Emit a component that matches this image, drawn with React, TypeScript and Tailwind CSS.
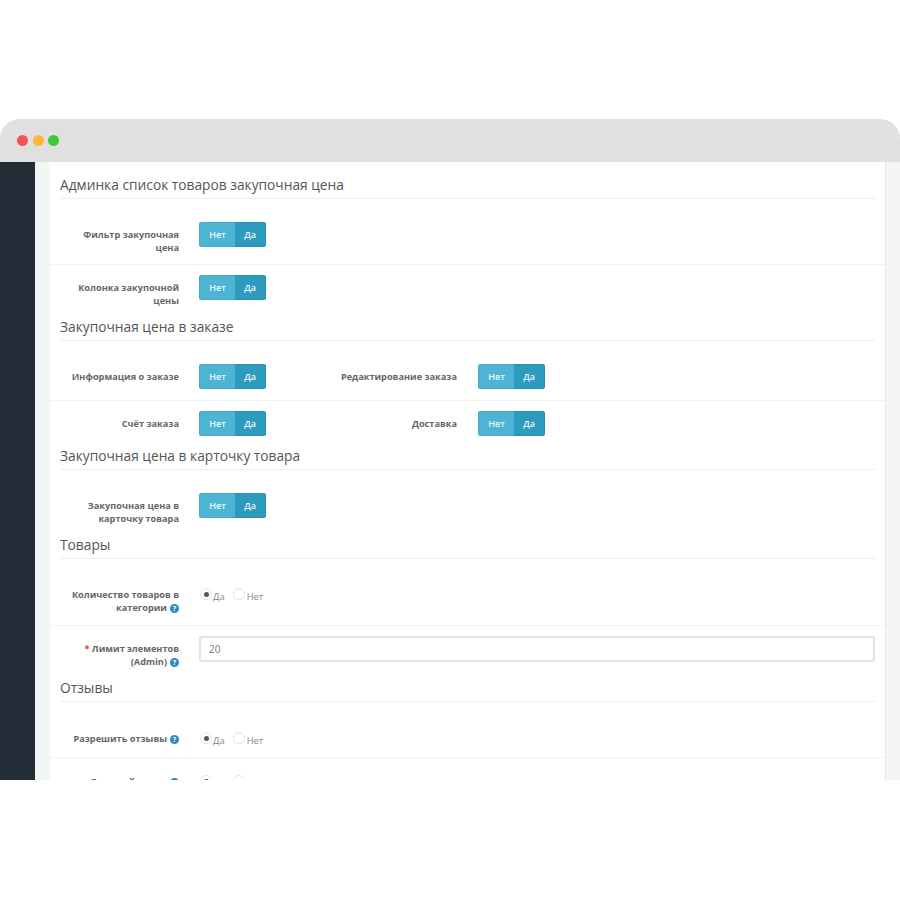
import React from "react";

const Toggle: React.FC = () => (
  <div className="flex w-[67px] h-[25px] rounded-[3px] overflow-hidden text-[9px] font-semibold text-[#eaf7fb] leading-[25px] text-center shrink-0">
    <div className="w-[36px] bg-[#4db4d4] border border-r-0 border-[#45a9c9]">
      <span className="block -mt-px">Нет</span>
    </div>
    <div className="w-[31px] bg-[#2e9abd] border border-l-0 border-[#2a90b1]">
      <span className="block -mt-px">Да</span>
    </div>
  </div>
);

const Help: React.FC = () => (
  <span className="inline-block align-[0px] ml-[3px] w-[9px] h-[9px] rounded-full bg-[#2a8bc4] text-white text-[7px] leading-[9px] font-bold text-center">
    ?
  </span>
);

const Radios: React.FC = () => (
  <div className="flex items-start pt-[6px] pl-[1px] text-[9.4px] text-[#888] leading-[13px]">
    <span className="w-[12px] h-[12px] rounded-full border border-[#e4e4e4] bg-white flex items-center justify-center">
      <span className="w-[5px] h-[5px] rounded-full bg-[#555]" />
    </span>
    <span className="ml-[1px] mt-[2px]">Да</span>
    <span className="ml-[8px] w-[12px] h-[12px] rounded-full border border-[#e4e4e4] bg-white" />
    <span className="ml-[2px] mt-[2px]">Нет</span>
  </div>
);

const Label: React.FC<{ children: React.ReactNode }> = ({ children }) => (
  <div className="w-[129px] mr-[20px] pt-[6px] text-right text-[9.2px] leading-[13px] font-bold text-[#666] shrink-0">
    {children}
  </div>
);

const Heading: React.FC<{ title: string }> = ({ title }) => (
  <div className="mx-[10px] h-[27px] border-b border-[#eeeeee] text-[13.75px] leading-[26px] text-[#555]">
    {title}
  </div>
);

export default function App() {
  return (
    <div className="w-[900px] h-[900px] bg-white pt-[119px] overflow-hidden font-['Open_Sans',sans-serif]">
      <div className="h-[661px] flex flex-col overflow-hidden rounded-t-[20px]">
        {/* browser bar */}
        <div className="h-[43px] bg-[#e0e0e0] flex items-center gap-[4.5px] pl-[17px] shrink-0">
          <span className="w-[11px] h-[11px] rounded-full bg-[#f55252]" />
          <span className="w-[11px] h-[11px] rounded-full bg-[#fbb735]" />
          <span className="w-[11px] h-[11px] rounded-full bg-[#3ec93a]" />
        </div>
        <div className="flex flex-1 min-h-0">
          <div className="w-[35px] bg-[#232d38] shrink-0" />
          <div className="w-[15px] bg-[#f4f5f5] shrink-0" />
          <main className="w-[835px] bg-white pt-[10px] overflow-hidden shrink-0">
            <Heading title="Админка список товаров закупочная цена" />
            <div className="h-[66px] pt-[23px] flex items-start border-b border-[#f2f2f2]">
              <Label>
                Фильтр закупочная
                <br />
                цена
              </Label>
              <Toggle />
            </div>
            <div className="h-[49px] pt-[10px] flex items-start">
              <Label>
                Колонка закупочной
                <br />
                цены
              </Label>
              <Toggle />
            </div>

            <Heading title="Закупочная цена в заказе" />
            <div className="h-[60px] pt-[23px] flex items-start border-b border-[#f2f2f2]">
              <Label>Информация о заказе</Label>
              <Toggle />
              <div className="w-[62px] shrink-0" />
              <Label>Редактирование заказа</Label>
              <div className="ml-[1px]">
                <Toggle />
              </div>
            </div>
            <div className="h-[42px] pt-[10px] flex items-start">
              <Label>Счёт заказа</Label>
              <Toggle />
              <div className="w-[62px] shrink-0" />
              <Label>Доставка</Label>
              <div className="ml-[1px]">
                <Toggle />
              </div>
            </div>

            <Heading title="Закупочная цена в карточку товара" />
            <div className="h-[62px] pt-[23px] flex items-start">
              <Label>Закупочная цена в карточку товара</Label>
              <Toggle />
            </div>

            <Heading title="Товары" />
            <div className="h-[67px] pt-[23px] flex items-start border-b border-[#f2f2f2]">
              <Label>
                Количество товаров в категории
                <Help />
              </Label>
              <Radios />
            </div>
            <div className="h-[49px] pt-[10px] flex items-start">
              <Label>
                <span className="text-[#e23c3c]">*</span> Лимит элементов (Admin)
                <Help />
              </Label>
              <div className="w-[676px] h-[26px] border-2 border-[#e2e2e2] rounded-[3px] pl-[8px] text-[10px] leading-[22px] text-[#777] shrink-0">
                20
              </div>
            </div>

            <Heading title="Отзывы" />
            <div className="h-[56px] pt-[24px] flex items-start border-b border-[#f2f2f2]">
              <Label>
                Разрешить отзывы
                <Help />
              </Label>
              <Radios />
            </div>
            <div className="pt-[11px] flex items-start">
              <Label>
                Гостевой отзыв
                <Help />
              </Label>
              <Radios />
            </div>
          </main>
          <div className="w-[15px] bg-[#f4f5f5] border-l border-[#e6e6e6] shrink-0" />
        </div>
      </div>
    </div>
  );
}
